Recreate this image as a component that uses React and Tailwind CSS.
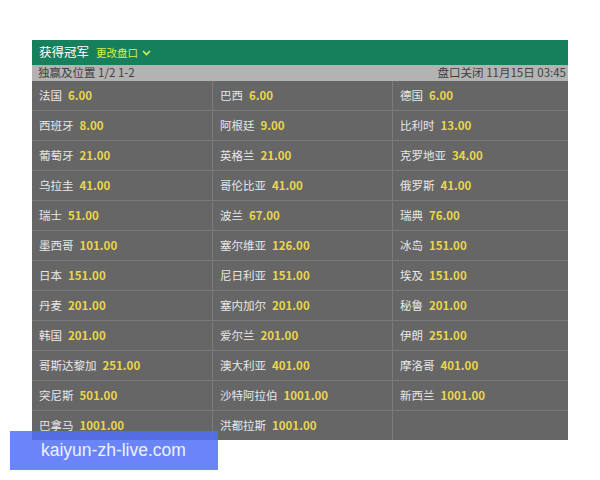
const rows = [
  [["法国", "6.00"], ["巴西", "6.00"], ["德国", "6.00"]],
  [["西班牙", "8.00"], ["阿根廷", "9.00"], ["比利时", "13.00"]],
  [["葡萄牙", "21.00"], ["英格兰", "21.00"], ["克罗地亚", "34.00"]],
  [["乌拉圭", "41.00"], ["哥伦比亚", "41.00"], ["俄罗斯", "41.00"]],
  [["瑞士", "51.00"], ["波兰", "67.00"], ["瑞典", "76.00"]],
  [["墨西哥", "101.00"], ["塞尔维亚", "126.00"], ["冰岛", "151.00"]],
  [["日本", "151.00"], ["尼日利亚", "151.00"], ["埃及", "151.00"]],
  [["丹麦", "201.00"], ["塞内加尔", "201.00"], ["秘鲁", "201.00"]],
  [["韩国", "201.00"], ["爱尔兰", "201.00"], ["伊朗", "251.00"]],
  [["哥斯达黎加", "251.00"], ["澳大利亚", "401.00"], ["摩洛哥", "401.00"]],
  [["突尼斯", "501.00"], ["沙特阿拉伯", "1001.00"], ["新西兰", "1001.00"]],
  [["巴拿马", "1001.00"], ["洪都拉斯", "1001.00"], null],
];

const font = { fontFamily: '"Noto Sans CJK SC", "Liberation Sans", sans-serif' };

const Cell = ({ item, last }) => (
  <div
    className={`flex items-center h-[30px] pl-[7px] border-b border-[#7a7a7a] ${
      last ? "" : "border-r border-r-[#7c7c7c]"
    }`}
  >
    {item && (
      <>
        <span className="text-[11.5px] text-[#e6e6e6]">{item[0]}</span>
        <span className="ml-[6px] text-[11.5px] font-bold text-[#e9d64c]">
          {item[1]}
        </span>
      </>
    )}
  </div>
);

const App = () => {
  return (
    <div className="relative w-[600px] h-[480px] bg-white" style={font}>
      <div className="absolute left-[32px] top-[40px] w-[536px] h-[400px] overflow-hidden bg-[#666666]">
        {/* header */}
        <div className="flex items-center h-[25px] bg-[#16805d] pl-[7px]">
          <span className="text-[12.5px] text-white">获得冠军</span>
          <span className="ml-[7px] text-[10.5px] text-[#d6f24c] flex items-center">
            更改盘口
            <svg width="9" height="6" viewBox="0 0 9 6" className="ml-[4px]">
              <path d="M1 1l3.5 3.5L8 1" stroke="#d6f24c" strokeWidth="1.6" fill="none" />
            </svg>
          </span>
        </div>

        {/* sub header */}
        <div className="flex items-center justify-between h-[16px] bg-[#b3b3b3] px-[6px] pr-[2px] text-[11.5px] text-[#404040]">
          <span>独赢及位置 1/2 1-2</span>
          <span>盘口关闭 11月15日 03:45</span>
        </div>

        {/* odds grid */}
        <div className="grid grid-cols-[181px_180px_175px]">
          {rows.map((row, i) =>
            row.map((item, j) => (
              <Cell key={`${i}-${j}`} item={item} last={j === 2} />
            ))
          )}
        </div>
      </div>

      {/* watermark */}
      <div className="absolute left-[10px] top-[431px] w-[208px] h-[39px] bg-[#4f70f6]/85 flex items-center pl-[31px]">
        <span
          className="text-[17.5px] text-[#eef1ff]"
          style={{ fontFamily: '"Liberation Sans", sans-serif' }}
        >
          kaiyun-zh-live.com
        </span>
      </div>
    </div>
  );
};

export default App;
